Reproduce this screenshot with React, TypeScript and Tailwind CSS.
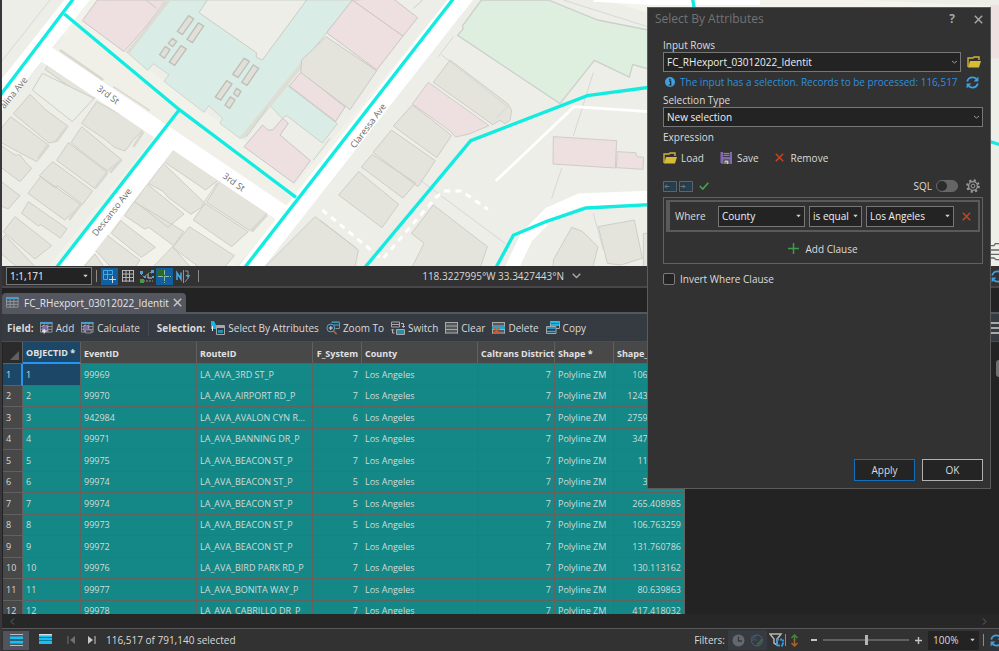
import type { ReactNode } from "react";

const rows = [
  ["99969", "LA_AVA_3RD ST_P", 7, "106.763259"],
  ["99970", "LA_AVA_AIRPORT RD_P", 7, "1243.204518"],
  ["942984", "LA_AVA_AVALON CYN RD_P", 6, "2759.118302"],
  ["99971", "LA_AVA_BANNING DR_P", 7, "347.550914"],
  ["99975", "LA_AVA_BEACON ST_P", 7, "11.720386"],
  ["99974", "LA_AVA_BEACON ST_P", 5, "3.408985"],
  ["99974", "LA_AVA_BEACON ST_P", 5, "265.408985"],
  ["99973", "LA_AVA_BEACON ST_P", 5, "106.763259"],
  ["99972", "LA_AVA_BEACON ST_P", 7, "131.760786"],
  ["99976", "LA_AVA_BIRD PARK RD_P", 7, "130.113162"],
  ["99977", "LA_AVA_BONITA WAY_P", 7, "80.639863"],
  ["99978", "LA_AVA_CABRILLO DR_P", 7, "417.418032"],
] as const;

const columns = [
  { label: "OBJECTID *", width: "w-[58px]" },
  { label: "EventID", width: "w-[116px]" },
  { label: "RouteID", width: "w-[116px]" },
  { label: "F_System", width: "w-[49px]", right: true },
  { label: "County", width: "w-[116px]" },
  { label: "Caltrans District", width: "w-[77px]", right: true },
  { label: "Shape *", width: "w-[59px]" },
  { label: "Shape_Length", width: "w-[71px]" },
];

function FolderIcon() {
  return (
    <svg width="14" height="12" viewBox="0 0 14 12" className="shrink-0">
      <path d="M1 11V2h5l1-1h5v3" fill="none" stroke="#cfb32c" strokeWidth="1.4" />
      <path d="M1 11.5 3 5h11l-2 6.5z" fill="#d6bb35" />
    </svg>
  );
}

function RefreshIcon() {
  return (
    <svg width="13" height="13" viewBox="0 0 13 13" fill="none" stroke="#3f9fe0" strokeWidth="1.9" className="shrink-0">
      <path d="M1.2 5.4C2 2.6 4 1.4 6.5 1.4c1.8 0 3 .6 4 1.8M11.8 7.6c-.8 2.8-2.8 4-5.3 4-1.8 0-3-.6-4-1.8" />
      <path d="M12.4.6v4.8H7.6zM.6 12.4V7.6h4.8z" fill="#3f9fe0" stroke="none" />
    </svg>
  );
}

function CrossIcon({ className = "text-[#c8441f]" }: { className?: string }) {
  return (
    <svg width="9" height="9" viewBox="0 0 9 9" className={`shrink-0 ${className}`}>
      <path d="m.8.8 7.4 7.4M8.2.8.8 8.2" stroke="currentColor" strokeWidth="1.5" />
    </svg>
  );
}

function SaveIcon() {
  return (
    <svg width="13" height="12" viewBox="0 0 13 12" className="shrink-0">
      <path d="M.5 0H12v12H2L.5 10.5z" fill="#8268b0" />
      <path d="M3 0h7v5H3zM3.5 7.5h6V12h-6z" fill="#3a3a3a" />
      <path d="M3.5 1.6h6M3.5 3.4h6" stroke="#a9a9a9" strokeWidth=".8" />
      <path d="M4.5 8.5h4V12h-2v-2h-1v2h-1z" fill="#c9c9c9" />
    </svg>
  );
}

function IndentIcon({ flip = false }: { flip?: boolean }) {
  return (
    <svg width="14" height="11" viewBox="0 0 14 11" className="shrink-0">
      <path d="M.5.5h13v10H.5z" fill="#263a48" stroke="#5d666c" />
      <path d="M7 3h5.5M7 5.5h5.5M7 8h5.5" stroke="#2a4759" />
      <path d={flip ? "M1.5 5.5H6M4 3.500l2 2-2 2" : "M6.5 5.5H2M4 3.500l-2 2 2 2"} fill="none" stroke="#6d777d" />
    </svg>
  );
}

function GearIcon() {
  return (
    <svg width="14" height="14" viewBox="0 0 14 14" fill="none" stroke="#9b9b9b" className="shrink-0">
      <circle cx="7" cy="7" r="5.8" strokeWidth="2" strokeDasharray="2.2 2.35" />
      <circle cx="7" cy="7" r="4.4" strokeWidth="1.3" />
      <circle cx="7" cy="7" r="1.9" />
    </svg>
  );
}

function GridIcon({ badge = "none" }: { badge?: "none" | "plus" | "calc" }) {
  return (
    <svg width="13" height="13" viewBox="0 0 14 13" className="shrink-0">
      <path d="M.5 1v10.5H13V1M.5 5.5H13M.5 8.5H13M4.5 3v8.5M8.5 3v8.5" fill="none" stroke="#96999d" />
      <path d="M0 .5h13.5v2.3H0z" fill="#4b9bcd" />
      {badge !== "none" && <path d="M3 4.5h5v6H3z" fill="#7d65a8" stroke="#c3c3c3" strokeWidth=".8" strokeDasharray="2 1" />}
      {badge === "plus" && <path d="M4.5 8v5M2 10.5h5" stroke="#eee" strokeWidth="1.3" />}
      {badge === "calc" && <path d="M5 9h6v3.5H5z" fill="#4a4c50" stroke="#aaa" strokeWidth=".7" />}
    </svg>
  );
}

function SelectIcon() {
  return (
    <svg width="14" height="14" viewBox="0 0 14 14" className="shrink-0">
      <path d="M0 0h3l2 4v4H0z" fill="#14b8e6" />
      <path d="M1.5 5v5" stroke="#eee" />
      <path d="M5.5 4.5h8v9h-8z" fill="#34383f" stroke="#a5a7a9" />
      <path d="M6 5h7v2H6z" fill="#a5a7a9" />
      <path d="M7 9h5v3H7z" fill="#2a8dab" />
    </svg>
  );
}

function ZoomToIcon() {
  return (
    <svg width="14" height="14" viewBox="0 0 14 14" fill="none" className="shrink-0">
      <path d="M5.5 1.5h8v6h-4" stroke="#8d8f91" />
      <path d="M6 1h7.5M8 4h5.5" stroke="#2b8fae" strokeWidth="1.5" />
      <circle cx="4.8" cy="7" r="3.9" stroke="#5aa6d6" />
      <path d="M4.8 5v4M2.8 7h4" stroke="#ddd" />
      <path d="m7.6 10 3 3.3" stroke="#b8672c" strokeWidth="1.6" />
    </svg>
  );
}

function SwitchIcon() {
  return (
    <svg width="14" height="14" viewBox="0 0 14 14" fill="none" className="shrink-0">
      <path d="M.5 1h8v5h-8zM.5 3.5h8" stroke="#a5a7a9" />
      <path d="M5.5 8.5h8v5h-8z" fill="#2a8dab" stroke="#a5a7a9" />
      <path d="M10 2.5h2.5V6M11 5l1.500 1.500L14 5M3.500 12h-2V8.500M0 9.500 1.500 8 3 9.500" stroke="#bbb" />
    </svg>
  );
}

function RowsIcon({ kind = "plain" }: { kind?: "plain" | "delete" | "all" | "selected" }) {
  if (kind === "selected") {
    return (
      <svg width="13" height="10" viewBox="0 0 13 10" className="shrink-0">
        <path d="M0 0h13v10H0z" fill="#18bff2" />
        <path d="M0 .7h13" stroke="#ddd" strokeWidth="1.4" />
        <path d="M0 3.5h13M0 6.5h13" stroke="#0b7b9d" />
      </svg>
    );
  }
  if (kind === "all") {
    return (
      <svg width="13" height="12" viewBox="0 0 13 12" className="shrink-0">
        <path d="M0 .5h13M0 11.5h13" stroke="#bbb" />
        <path d="M0 2.5h13v7H0z" fill="#18bff2" />
        <path d="M0 6h13" stroke="#32434d" strokeWidth="1.5" />
      </svg>
    );
  }
  return (
    <svg width="13" height="12" viewBox="0 0 13 12" className="shrink-0">
      <path d="M0 0h13v11.5H0z" fill="#54575b" />
      <path d="M0 .5h13M0 4h13M0 7.5h13M0 11h13M.5 0v11.5M12.5 0v11.5" stroke="#a6a7a8" />
      {kind === "delete" && (
        <>
          <path d="M0 4.500h13V7H0z" fill="#18a9d8" />
          <path d="m2 6 5.500 5.500M7.500 6 2 11.500" stroke="#e0531f" strokeWidth="1.7" />
        </>
      )}
    </svg>
  );
}

function CopyIcon() {
  return (
    <svg width="14" height="13" viewBox="0 0 14 13" className="shrink-0">
      <path d="M4.500.5h9v7h-9z" fill="#34383f" stroke="#a5a7a9" />
      <path d="M4 1.500h10M5 4h8" stroke="#18b5e6" strokeWidth="1.8" />
      <path d="M.5 5.500H10v7H.5z" fill="#34383f" stroke="#a5a7a9" />
      <path d="M1 7h8.500M1 10.500h8.500" stroke="#18b5e6" strokeWidth="1.6" />
    </svg>
  );
}

function Caret({ chevron = false }: { chevron?: boolean }) {
  return (
    <svg width="7" height="7" viewBox="0 0 7 7" className="pointer-events-none absolute top-1/2 right-[3px] -translate-y-1/2">
      {chevron ? <path d="m1 2.5 2.5 2L6 2.500" fill="none" stroke="#9a9a9a" /> : <path d="M1.3 2.300h4.400L3.500 4.800z" fill="#d5d5d5" />}
    </svg>
  );
}

function Picker({ label, value, className, chevron = false }: { label: string; value: string; className: string; chevron?: boolean }) {
  return (
    <span className={`relative flex ${className}`}>
      <select
        aria-label={label}
        className="w-full appearance-none border border-[#777] bg-[#232323] pr-2 pl-[3px] text-[#f0f0f0] outline-none"
      >
        <option>{value}</option>
      </select>
      <Caret chevron={chevron} />
    </span>
  );
}

function ToolButton({ icon, children }: { icon: ReactNode; children: ReactNode }) {
  return (
    <button type="button" className="flex items-center gap-[3px] whitespace-nowrap">
      {icon}
      {children}
    </button>
  );
}

function CityMap() {
  return (
    <svg viewBox="6 0 2991 798" preserveAspectRatio="xMinYMin slice" className="block h-full w-full" aria-label="Map">
      <path d="M0 0h2997v798H0z" fill="#edeee8" />
      {/* sidewalks */}
      <path d="M100 130 240-20 310 0 250 60 380 160 730 420 885 555 1360-20h80L680 830H120L510 350 180 100 0 320V240z" fill="#f1f2ea" />
      <path d="M160 150 230 70 885 600 850 680z" fill="#f0f0e8" />
      {/* teal and pink blocks */}
      <path d="M500 0h560L905 190 730 412l-10 3-60-45 8-15-42-38-14 20-120-93 15-20-47-33-17 20-58-51z" fill="#d9ece5" stroke="#cfd5cf" strokeWidth="3" />
      <path d="m622 0-25 38 172 120v14l18 8L920 0z" fill="#edeee8" stroke="#cbcdc7" strokeWidth="3" />
      <path d="M292 0h205l-55 75-70 80-125-93zM432-5l38 30" fill="#eedfe0" stroke="#cdc8c6" strokeWidth="3" />
      <path d="m445 75-68 82 10 5L520-10h-22z" fill="#dcdcd5" />
      <path d="m812 318 50-62 150 115-45 58-108-83-12 10z" fill="#d9ece5" stroke="#cbd2cc" strokeWidth="3" />
      <path d="m720 412 190-234 6 14-181 223z" fill="#dddfd7" />
      <path d="m732 440 56-65 15 15h15l30-35 17 15-25 35 91 77-50 67z" fill="#eedfe0" stroke="#cbc6c4" strokeWidth="3" />
      <path d="m868 258 35-42 132 105-28 43z" fill="#eedfe0" stroke="#cbc6c4" strokeWidth="3" />
      <path d="m905 180 73-70 152 102-80 117-148-112z" fill="#e4e4dd" stroke="#cbcbc4" strokeWidth="3" />
      <path d="m980 98 77-98 152 108-79 102z" fill="#eedfe0" stroke="#cbc6c4" strokeWidth="3" />
      <path d="m1057 0 152 108 44-55-75-58z" fill="#eedfe0" stroke="#cbc6c4" strokeWidth="3" />
      <path d="m1240 25 50-45M800 325l-60 85M940 480l50-65" stroke="#ced0cb" strokeWidth="3" />
      <path
        d="m532 94 34-47 15 10-34 47zM561 118l34-49 16 9-34 50zM505 130l12-15 13 9-12 16zM479 164l17-25 14 10-17 26zM508 186l35-49 16 10-35 49zM698 223l34-48 16 9-34 49zM725 247l35-52 16 10-35 51zM646 291l34-49 16 10-34 48zM701 281l9-16 13 9-10 16zM675 315l16-24 14 9-16 25z"
        fill="#e0e0d8"
        stroke="#bdbfb8"
        strokeWidth="4"
      />
      {/* residential lots, west side */}
      <g fill="#e4e4dd" stroke="#cecec7" strokeWidth="3">
        <path d="m147 190-12 18 80 57 15 22 25 18 35-15z" />
        <path d="m127 220-30 50 120 95 65-70z" fill="#eceee8" />
        <path d="m90 283-50 58 107 88 25-5 32-45-70-52zM32 350-20 415l130 70 38-48z" />
        <path d="m0 435 45 30h15l15 20 20 20-35 40-60-45zM0 542l60 45-35 40-25-10z" />
        <path d="m290 305-45 65 70 48 30 25 30 10 10-12 12-18 38-40z" />
        <path d="m245 380-32 48 30 25 80 60 40-35zM205 428l-35 53 115 85 38-48zM158 485l-40 42 45 35 10-4 75 55 30-40zM122 530l-38 50 110 80 50-45zM85 605l-20 35 50 38 8-4 58 40 20-28zM45 650l-35 45 95 82 50-40zM15 705l-25 45 60 50h55z" />
        <path d="m520 450-28 35 125 85 42-33zM490 490l-45 60 45 25 15 18 68 50 45-30zM442 552l-38 52 100 78 48-40zM402 605l-28 42 60 40 12-5 75 55 30-43zM362 662l-28 38 90 72 42-30zM320 705l-35 45 55 60h60l20-30zM285 762l-45 50h80z" />
        <path d="m660 542-40 65 130 85 55-55zM615 610l-35 50 115 80 50-45zM568 680l-50 62 80 60h75l30-35zM518 740l-58 60h110z" />
      </g>
      <g fill="none" stroke="#d8d8d1" strokeWidth="8">
        <path d="m200 382-32 42M145 435l-30 40M365 478l-35 40M320 520l-35 45M245 610l-38 50M800 645l-45 50M400 440l30-45M180 150l130 90" />
        <path d="m652 548-48 72M340 260l110 72" strokeWidth="4" />
      </g>
      {/* lots east of Claressa */}
      <g fill="#e4e4dd" stroke="#cecec7" strokeWidth="3">
        <path d="m1310 180-50 67 178 127 22-13 15 10 15-10 5-30-12-20z" transform="translate(40)" />
        <path d="m1261 247-48 65 115 82 15 17 40-9 60-25z" fill="#eedfe0" transform="translate(24)" />
        <path d="m1213 315-57 63 130 95 45-67zM1150 390l-55 67 135 103 52-78zM1092 463l-32 38 125 93 38-45zM1052 515l-60 70 130 98 50-70z" transform="translate(24)" />
        <path d="m960 660 110 85-25 60H910l-60-20z" />
        <path d="m1300 615-65 85 37 30-35 70h205l20-60z" />
        <path d="m945 650-150 150h270l10-50z" />
        <path d="m1660 780 55-98 32 12 47 46-15 60h-120zM1795 680l108-20 24 115-65 20-40-5zM1930 700h60v100h-60z" />
        <path d="m1660 410 190 12-4 82-187-12zM1852 455l55 3 4 12 20 2-2 36-80-5z" fill="#eedfe0" />
      </g>
      {/* park */}
      <path d="m1432 0-57 78 3 8-17 20 307 205 103-130 105 50 10-37 145 40V110L1781 60 1633 0z" fill="#deefdf" stroke="#ccd0c9" strokeWidth="4" transform="translate(12)" />
      <path d="m1325 165 198 155-35 35M1780 218l-60 190M1685 505l-30 90M1260 540l255 190M1360 110l-45 60M0 190 150 0M1690 0l300 95M1780 640l30 110" fill="none" stroke="#d5d8d7" strokeWidth="3" />
      <path d="M1700-10h700l600 30v30H1980L1820 0z" fill="#f4f4ec" />
      <path d="m1780 5 180 10h320V0h-500z" fill="#fff" />
      <path d="M2970 15h27v160h-27z" fill="#eedfe0" />
      {/* roads */}
      <g fill="none" stroke="#fff" strokeWidth="60">
        <path d="M255-30-30 330" />
        <path d="m120 150 750 505" strokeWidth="52" />
        <path d="M525 395 200 815" />
        <path d="M1400-25 715 850" />
        <path d="m1530 815 50-105 70-70 90-40 260-10" strokeWidth="40" />
      </g>
      <path d="m1487 543 235-223 268 18" fill="none" stroke="#fff" strokeWidth="8" />
      <path d="m967 630 180 148 160-185 25-20h52l80 55" fill="none" stroke="#fff" strokeWidth="9" strokeDasharray="18 16" />
      {/* selected centerlines */}
      <g fill="none" stroke="#12ebe0" strokeWidth="10">
        <path d="M225-10 0 287M193 42l345 287 350 263M538 329 165 808M1365-10 730 808" />
        <path d="m1090 808 322-386 350-135 260-35M1485 808l55-102 100-42 118-40 264-14M2075-20l15 90" />
        <path d="m2970 425 40 12" />
      </g>
      <g fill="#6c6c6c" fontFamily="Open Sans, sans-serif" fontSize="27" textAnchor="middle">
        <text transform="translate(319 292) rotate(36)">3rd St</text>
        <text transform="translate(696 554) rotate(36)">3rd St</text>
        <text transform="translate(343 642) rotate(-52)">Descanso Ave</text>
        <text transform="translate(1112 383) rotate(-53)">Claressa Ave</text>
        <text transform="translate(48 284) rotate(-51)">alina Ave</text>
      </g>
      <path d="M2970 737h12l4-6h20M2970 750h30M2970 763h30M2970 774h12l6 5h20" fill="none" stroke="#666" strokeWidth="4" />
    </svg>
  );
}

function MapStatusBar() {
  return (
    <div className="flex h-[22px] items-center justify-between border-b-2 border-[#46464b] bg-[#323232] pl-1">
      <div className="flex h-full items-center">
        <Picker label="Map scale" value="1:1,171" className="w-[86px] leading-4" />
        <span className="mx-1 h-3 w-px bg-[#8b8b8b]" />
        <button type="button" aria-label="Snapping" className="grid size-[17px] place-items-center bg-[#125f9f]">
          <svg width="13" height="13" viewBox="0 0 13 13" fill="none" stroke="#4aa5df">
            <path d="M.5 4.5v-4h9v4M4.5.5v9M.5 4.5h9M.5 4.5v5h4" />
            <path d="M9.5 6v7M6 9.5h7" stroke="#c9d7e2" />
          </svg>
        </button>
        <button type="button" aria-label="Grid" className="ml-[3px] p-px">
          <svg width="12" height="12" viewBox="0 0 12 12" stroke="#b5b5b5">
            <path d="M0 .5h12M0 4h12M0 7.5h12M0 11h12M.5 0v12M4 0v12M7.5 0v12M11.5 0v12" fill="none" />
          </svg>
        </button>
        <button type="button" aria-label="Inference" className="ml-1 p-px">
          <svg width="14" height="13" viewBox="0 0 14 13" fill="none">
            <path d="m1 4 3 3 6-5M10 2l2 2M3 11h10" stroke="#8d9a88" strokeDasharray="2 1" />
            <path d="M0 1h3v3H0zM11 0h3v3h-3zM4 6h2v2H4zM12 6h2v2h-2z" fill="#4aa5df" />
            <path d="M0 9h4v4H0z" fill="#4a9a43" />
            <path d="M8 4v4h4" stroke="#ccc" />
          </svg>
        </button>
        <button type="button" aria-label="Dynamic constraints" className="ml-px grid size-[17px] place-items-center bg-[#125f9f]">
          <svg width="15" height="15" viewBox="0 0 15 15" fill="none">
            <path d="M1 1h6v6H1z" fill="#2c6b27" />
            <path d="M7.5 1v13M1 7.5h13" stroke="#8bb8a5" strokeDasharray="5 1" />
          </svg>
        </button>
        <button type="button" aria-label="Correction" className="ml-[3px]">
          <svg width="15" height="13" viewBox="0 0 15 13" fill="none">
            <path d="M1 10V3l4 6V2.5" stroke="#4aa5df" strokeWidth="1.6" />
            <path d="M7.5 0v13M9 1h3v4M9 12l4-5" stroke="#8e9499" />
            <path d="m9.5 5 2.500 3 2.500-3z" fill="#4aa5df" />
          </svg>
        </button>
        <span className="ml-[7px] h-3 w-px bg-[#8b8b8b]" />
      </div>
      <div className="flex items-center gap-2 text-[#d8d8d8]">
        118.3227995°W 33.3427443°N
        <svg width="9" height="6" viewBox="0 0 9 6" fill="none" stroke="#aaa" strokeWidth="1.4" className="mr-[402px]">
          <path d="m.7.7 3.8 3.800L8.300.7" />
        </svg>
        <span className="-mr-[5px]">
          <RefreshIcon />
        </span>
      </div>
    </div>
  );
}

function AttributeToolbar() {
  return (
    <div className="flex h-7 items-center justify-between border-b border-[#4c4c50] bg-[#363a41] pl-[5px] text-[#dadada]">
      <div className="flex items-center gap-[7px]">
        <div className="flex items-center gap-[6px]">
          <b className="font-bold">Field:</b>
          <ToolButton icon={<GridIcon badge="plus" />}>Add</ToolButton>
        </div>
        <ToolButton icon={<GridIcon badge="calc" />}>Calculate</ToolButton>
        <span className="mx-px h-4 w-px bg-[#45494f]" />
        <div className="flex items-center gap-[6px]">
          <b className="font-bold">Selection:</b>
          <ToolButton icon={<SelectIcon />}>Select By Attributes</ToolButton>
        </div>
        <ToolButton icon={<ZoomToIcon />}>Zoom To</ToolButton>
        <ToolButton icon={<SwitchIcon />}>Switch</ToolButton>
        <ToolButton icon={<RowsIcon />}>Clear</ToolButton>
        <ToolButton icon={<RowsIcon kind="delete" />}>Delete</ToolButton>
        <ToolButton icon={<CopyIcon />}>Copy</ToolButton>
      </div>
      <button type="button" aria-label="Table options" className="w-2">
        <svg width="8" height="12" viewBox="0 0 8 12">
          <path d="M0 1h8M0 6h8M0 11h8" stroke="#a9a9a9" strokeWidth="2" />
        </svg>
      </button>
    </div>
  );
}

function AttributeTable() {
  const cell = "truncate border-r border-b border-[#5f6462] px-[3px]";
  return (
    <div className="relative min-h-0 flex-1 overflow-hidden bg-[#232323] pl-px">
      <table className="w-[682px] table-fixed border-separate border-spacing-0 text-[9px] text-[#d2dbd9]">
        <thead>
          <tr className="h-[22px] bg-[#484848] text-[#e2e2e2]">
            <th aria-label="Row" className="w-5 border-r border-b border-[#606060] bg-[#2b2b2b] p-0">
              <svg width="18" height="19" viewBox="0 0 18 19">
                <path d="M16 8v9H7z" fill="#606060" />
              </svg>
            </th>
            {columns.map((col, i) => (
              <th
                key={col.label}
                className={`${col.width} overflow-hidden border-r border-[#606060] px-[3px] pt-[2px] font-bold whitespace-nowrap ${col.right ? "text-right" : "text-left"} ${
                  i === 0 ? "border-b-2 border-b-[#2495f3] bg-[#1c4767]" : "border-b"
                }`}
              >
                {col.label}
              </th>
            ))}
          </tr>
        </thead>
        <tbody>
          {rows.map(([event, route, system, length], i) => (
            <tr key={i} className="bg-[#138886] odd:h-[22px] even:h-[21px]">
              <th
                scope="row"
                className={`border-r border-b border-[#606060] pl-[3px] text-left font-normal ${
                  i === 0 ? "border-r-2 border-r-[#2495f3] bg-[#1c4767]" : "bg-[#484848]"
                }`}
              >
                {i + 1}
              </th>
              <td className={`${cell} ${i === 0 ? "bg-[#1c4767]" : ""}`}>{i + 1}</td>
              <td className={cell}>{event}</td>
              <td className={cell}>{route}</td>
              <td className={`${cell} text-right`}>{system}</td>
              <td className={cell}>Los Angeles</td>
              <td className={`${cell} text-right`}>7</td>
              <td className={cell}>Polyline ZM</td>
              <td className={`${cell} text-right`}>{length}</td>
            </tr>
          ))}
        </tbody>
      </table>
      <div className="absolute top-[18px] right-0 h-[17px] w-[3px] rounded-l-sm bg-[#707070]" />
    </div>
  );
}

function TableFooter() {
  return (
    <div className="flex h-[22px] items-center justify-between bg-[#323232] text-[#dadada]">
      <div className="flex h-full items-center">
        <button type="button" aria-label="Show all records" className="ml-px grid h-[19px] w-[26px] place-items-center bg-[#51545c]">
          <RowsIcon kind="all" />
        </button>
        <button type="button" aria-label="Show selected records" className="mb-[3px] ml-[10px]">
          <RowsIcon kind="selected" />
        </button>
        <button type="button" aria-label="First record" className="ml-[15px]">
          <svg width="9" height="8" viewBox="0 0 9 8">
            <path d="M1 0v8" stroke="#707070" />
            <path d="M8 0v8L3 4z" fill="#707070" />
          </svg>
        </button>
        <button type="button" aria-label="Last record" className="ml-[11px]">
          <svg width="9" height="8" viewBox="0 0 9 8">
            <path d="M8 0v8" stroke="#c8c8c8" />
            <path d="M1 0v8l5-4z" fill="#c8c8c8" />
          </svg>
        </button>
        <span className="ml-[10px]">116,517 of 791,140 selected</span>
      </div>
      <div className="flex h-full items-center">
        <span className="mr-[3px]">Filters:</span>
        <div className="flex h-5 items-center gap-[5px] bg-[#363a41] px-1">
          <svg width="13" height="13" viewBox="0 0 13 13">
            <circle cx="6.5" cy="6.5" r="6" fill="#65686b" />
            <path d="M6.5 2.5V7H10" fill="none" stroke="#363a41" strokeWidth="1.3" />
          </svg>
          <svg width="13" height="13" viewBox="0 0 13 13" fill="none">
            <circle cx="7" cy="6.5" r="5.5" stroke="#566068" />
            <path d="M1 3h6M2 6h5M4 1v6" stroke="#3b5c78" strokeDasharray="2 1" />
            <path d="M7 9c3 0 2-4 5-4-.5 4-2 6-5 6z" fill="#416648" />
          </svg>
        </div>
        <svg width="15" height="14" viewBox="0 0 15 14" fill="none" className="ml-[2px]">
          <path d="M1 1h11L8 6v6l-3-2V6z" stroke="#b5b5b5" strokeWidth="1.5" />
          <path d="M8 6.5h6v6H8z" stroke="#2d9ae0" strokeWidth="2" strokeDasharray="2 1" />
        </svg>
        <span className="ml-px h-3 w-px bg-[#8b8b8b]" />
        <svg width="9" height="13" viewBox="0 0 9 13" fill="none" strokeWidth="1.5" className="ml-1">
          <path d="M4.5 6V1M1.5 4l3-3 3 3" stroke="#4a8240" />
          <path d="M4.5 5v7M1.5 9l3 3 3-3" stroke="#a8652c" />
        </svg>
        <button type="button" aria-label="Zoom out" className="ml-3 h-[2px] w-[6px] bg-[#c5c5c5]" />
        <input
          type="range"
          aria-label="Table zoom"
          defaultValue="50"
          className="mx-[6px] h-3 w-[86px] appearance-none bg-[linear-gradient(#606060,#606060)] bg-[length:100%_2px] bg-center bg-no-repeat [&::-webkit-slider-thumb]:h-[10px] [&::-webkit-slider-thumb]:w-[3px] [&::-webkit-slider-thumb]:appearance-none [&::-webkit-slider-thumb]:bg-[#b5b5b5]"
        />
        <button type="button" aria-label="Zoom in">
          <svg width="7" height="7" viewBox="0 0 7 7">
            <path d="M3.5 0v7M0 3.5h7" stroke="#c5c5c5" strokeWidth="1.4" />
          </svg>
        </button>
        <span className="relative ml-[6px] flex w-[51px] bg-[#232323]">
          <select aria-label="Zoom level" className="w-full appearance-none pl-[5px] leading-[19px]">
            <option>100%</option>
          </select>
          <Caret />
        </span>
        <span className="mr-[6px] ml-1 h-3 w-px bg-[#8b8b8b]" />
        <span className="w-[9px] overflow-hidden">
          <RefreshIcon />
        </span>
      </div>
    </div>
  );
}

function TablePanel() {
  return (
    <section className="flex h-[363px] flex-col bg-[#232323]">
      <div className="flex h-[26px] items-end border-b-2 border-[#54575f]">
        <div className="flex h-[19px] items-center rounded-t-sm bg-[#54575f] px-1 text-[#e6e6e6]">
          <GridIcon />
          <span className="mr-1 ml-[5px]">FC_RHexport_03012022_Identit</span>
          <button type="button" aria-label="Close table">
            <CrossIcon className="text-[#c4c4c4]" />
          </button>
        </div>
      </div>
      <AttributeToolbar />
      <AttributeTable />
      <div className="flex h-[15px] items-center justify-between border-b border-[#59595c] bg-[#272727] px-2 text-[#666]">
        <svg width="5" height="7" viewBox="0 0 5 7" fill="none" stroke="currentColor">
          <path d="M4 .5 1 3.500l3 3" />
        </svg>
        <svg width="5" height="7" viewBox="0 0 5 7" fill="none" stroke="currentColor" className="mr-1">
          <path d="m1 .5 3 3-3 3" />
        </svg>
      </div>
      <TableFooter />
    </section>
  );
}

function SelectDialog() {
  return (
    <div
      role="dialog"
      aria-labelledby="dialog-title"
      className="absolute top-[7px] right-2 flex h-[482px] w-[344px] flex-col border border-[#5c5c5c] bg-[#323232] pr-[7px] pl-[15px] text-[#dcdcdc]"
    >
      <header className="flex h-[22px] items-center">
        <h1 id="dialog-title" className="-ml-2 flex-1 text-[12px] text-[#737373]">
          Select By Attributes
        </h1>
        <button type="button" aria-label="Help" className="mr-[19px] text-[12px] font-bold text-[#a5a5a5]">
          ?
        </button>
        <button type="button" aria-label="Close">
          <CrossIcon className="text-[#a5a5a5]" />
        </button>
      </header>

      <div className="mt-2 leading-[14px]">Input Rows</div>
      <div className="flex items-center gap-[6px]">
        <Picker label="Input Rows" value="FC_RHexport_03012022_Identit" className="flex-1 leading-[18px]" chevron />
        <button type="button" aria-label="Browse" className="mr-[2px]">
          <FolderIcon />
        </button>
      </div>
      <div className="mb-px flex h-5 items-center text-[#2f8fdd]">
        <svg width="10" height="10" viewBox="0 0 10 10" className="mr-[5px] ml-[2px] shrink-0">
          <circle cx="5" cy="5" r="5" fill="#3f9fe0" />
          <path d="M4 4.2h1.700V8M3.700 8h2.800M4.300 2.300h1.400" fill="none" stroke="#252525" strokeWidth="1.2" />
        </svg>
        <span className="flex-1 whitespace-nowrap">The input has a selection. Records to be processed: 116,517</span>
        <button type="button" aria-label="Refresh" className="mr-1">
          <RefreshIcon />
        </button>
      </div>
      <div className="leading-[14px]">Selection Type</div>
      <Picker label="Selection Type" value="New selection" className="leading-[18px]" chevron />
      <div className="mt-[3px] leading-[14px]">Expression</div>

      <div className="mt-[5px] flex h-[17px] items-center gap-4">
        <button type="button" className="flex items-center gap-1">
          <FolderIcon />
          Load
        </button>
        <button type="button" className="flex items-center gap-1">
          <SaveIcon />
          Save
        </button>
        <button type="button" className="flex items-center gap-[7px]">
          <CrossIcon />
          Remove
        </button>
      </div>

      <div className="mt-[11px] flex h-[18px] items-center">
        <IndentIcon />
        <span className="w-[2px]" />
        <IndentIcon flip />
        <svg width="10" height="8" viewBox="0 0 10 8" className="ml-[6px]">
          <path d="m.8 4 3 3L9.300.8" fill="none" stroke="#41a548" strokeWidth="1.7" />
        </svg>
        <label htmlFor="sql" className="ml-auto">
          SQL
        </label>
        <input
          id="sql"
          type="checkbox"
          role="switch"
          className="mr-2 ml-1 h-3 w-[22px] appearance-none rounded-full border border-[#686868] bg-[#656565] before:block before:size-[10px] before:rounded-full before:bg-[#2c2c2c]"
        />
        <button type="button" aria-label="Settings" className="mr-[3px]">
          <GearIcon />
        </button>
      </div>

      <div className="mt-[2px] flex flex-col border border-[#626262]">
        <div className="m-[2px] flex h-8 items-center border-2 border-l-[4px] border-[#5a5a5a] pl-[5px]">
          <span className="w-[43px]">Where</span>
          <Picker label="Field" value="County" className="mr-1 w-[87px] leading-[19px]" />
          <Picker label="Operator" value="is equal" className="mr-1 w-[53px] leading-[19px]" />
          <Picker label="Value" value="Los Angeles" className="mr-2 w-[88px] leading-[19px]" />
          <button type="button" aria-label="Remove clause">
            <CrossIcon />
          </button>
        </div>
        <button type="button" className="flex h-[29px] items-center justify-center gap-[6px]">
          <svg width="11" height="11" viewBox="0 0 11 11">
            <path d="M5.5 0v11M0 5.5h11" stroke="#419a48" strokeWidth="1.5" />
          </svg>
          Add Clause
        </button>
      </div>

      <label className="mt-2 flex items-center gap-[5px]">
        <input type="checkbox" className="size-3 appearance-none rounded-xs border border-[#7b7b7b] bg-[#242424]" />
        Invert Where Clause
      </label>

      <footer className="mt-auto mb-[7px] flex justify-end gap-[7px] leading-5">
        <button type="button" className="w-[61px] border border-[#0f70c0] bg-[#242424]">
          Apply
        </button>
        <button type="button" className="w-[61px] border border-[#b0b0b0] bg-[#242424]">
          OK
        </button>
      </footer>
    </div>
  );
}

export default function App() {
  return (
    <main className="relative flex h-screen flex-col overflow-hidden border-l-2 border-[#38383c] bg-[#232323] font-['Open_Sans','Noto_Sans',sans-serif] text-[10px]/[14px]">
      <div className="min-h-0 flex-1 overflow-hidden">
        <CityMap />
      </div>
      <MapStatusBar />
      <TablePanel />
      <SelectDialog />
    </main>
  );
}
